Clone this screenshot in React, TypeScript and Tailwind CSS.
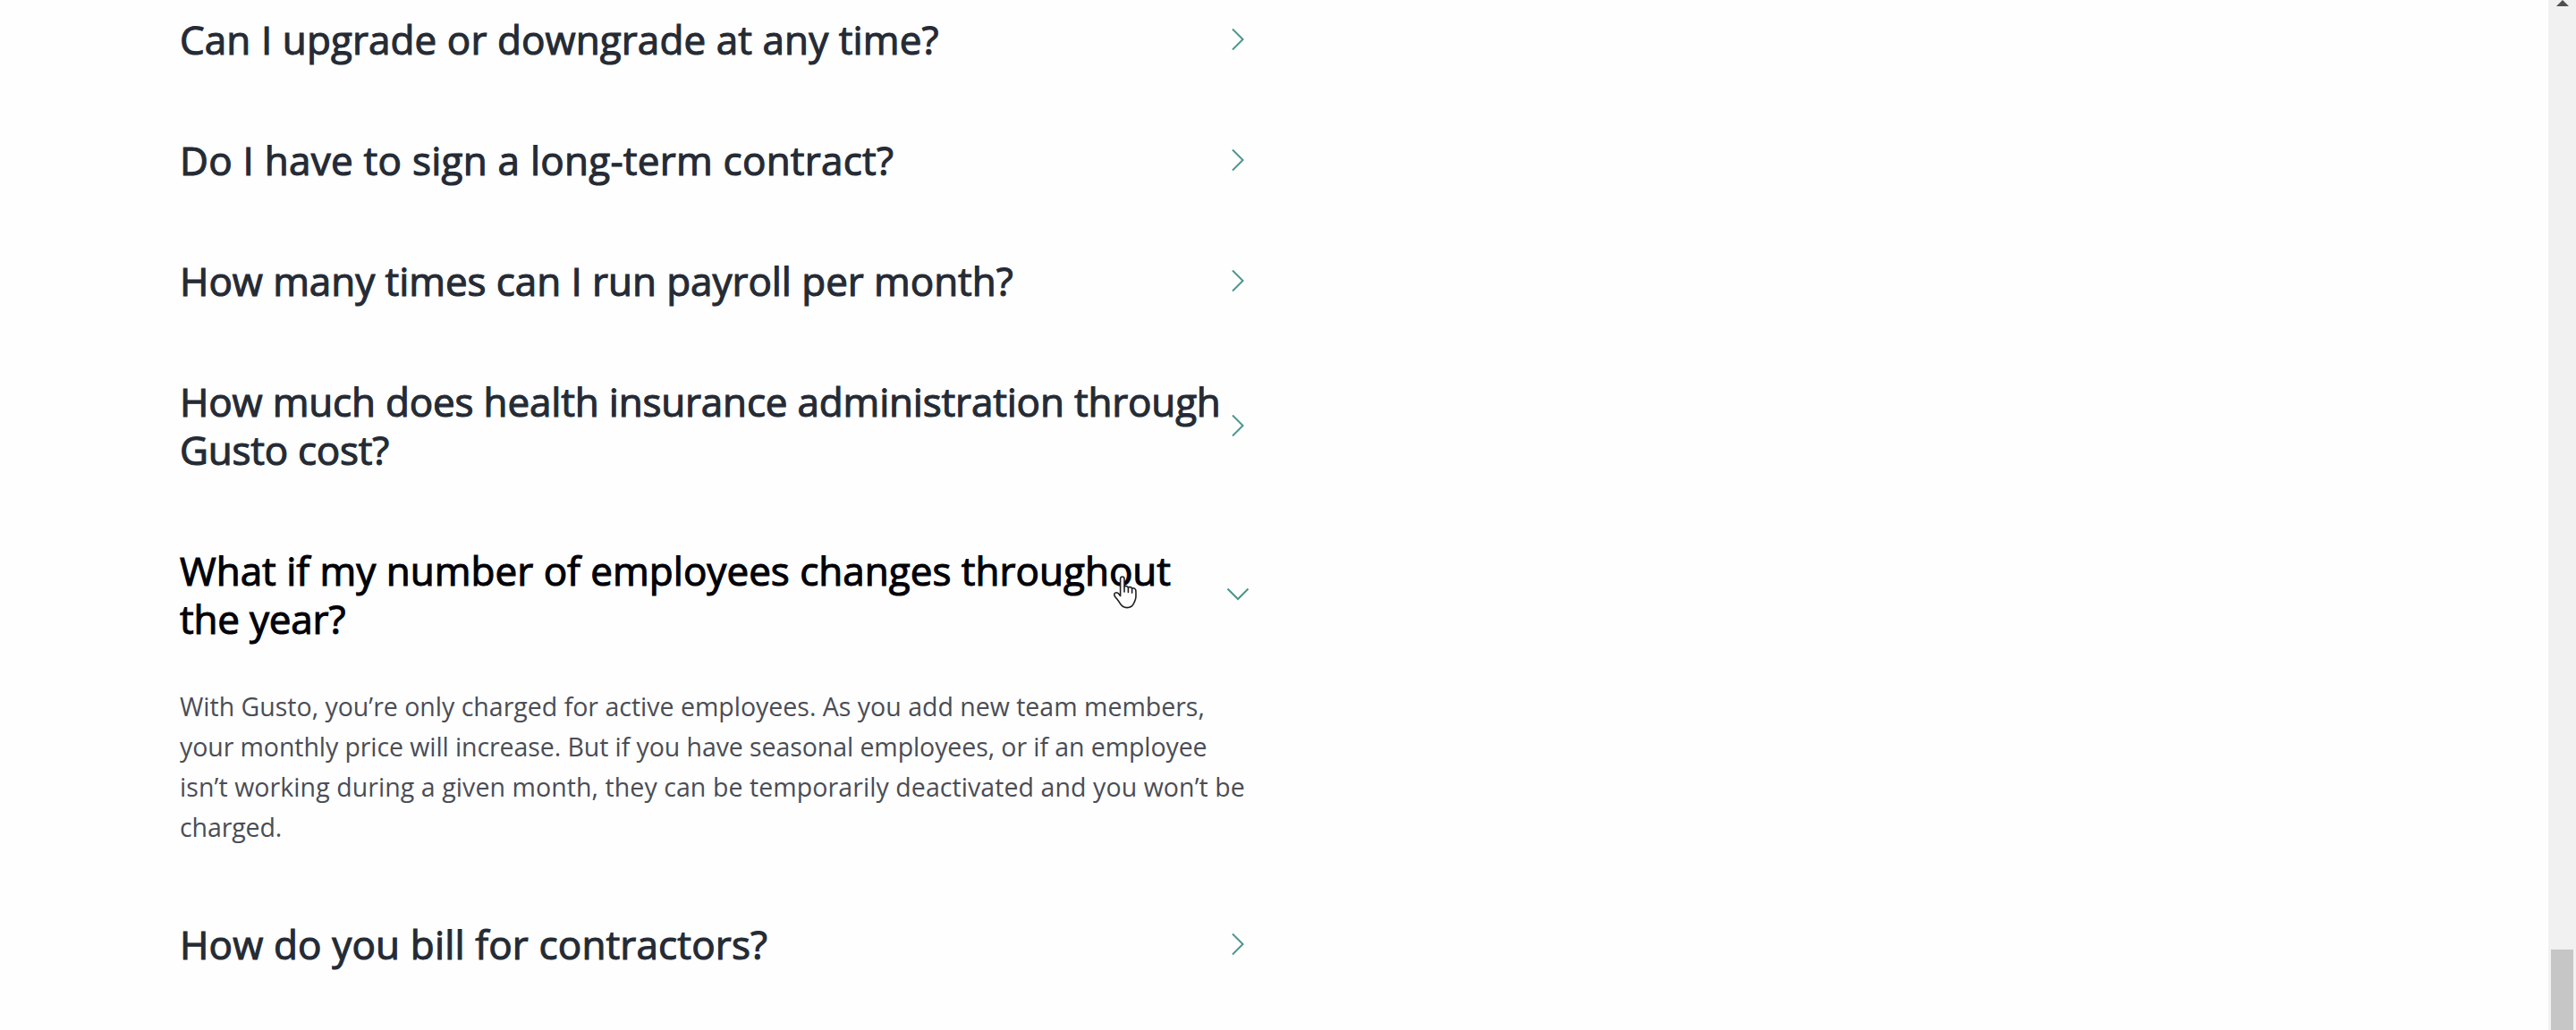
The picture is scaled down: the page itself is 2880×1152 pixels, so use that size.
type Line = { text: string; tracking: string };

type Faq = { lines: Line[]; open?: boolean };

const faqs: Faq[] = [
  { lines: [{ text: "Can I upgrade or downgrade at any time?", tracking: "tracking-[0.09px]" }] },
  { lines: [{ text: "Do I have to sign a long-term contract?", tracking: "tracking-[0.25px]" }] },
  { lines: [{ text: "How many times can I run payroll per month?", tracking: "tracking-[-0.06px]" }] },
  {
    lines: [
      { text: "How much does health insurance administration through", tracking: "tracking-[-0.18px]" },
      { text: "Gusto cost?", tracking: "tracking-[-0.25px]" },
    ],
  },
  {
    open: true,
    lines: [
      { text: "What if my number of employees changes throughout", tracking: "tracking-[0.01px]" },
      { text: "the year?", tracking: "tracking-[-0.2px]" },
    ],
  },
  { lines: [{ text: "How do you bill for contractors?", tracking: "tracking-[0.15px]" }] },
];

const answer: Line[] = [
  { text: "With Gusto, you’re only charged for active employees. As you add new team members,", tracking: "tracking-normal" },
  { text: "your monthly price will increase. But if you have seasonal employees, or if an employee", tracking: "tracking-[-0.08px]" },
  { text: "isn’t working during a given month, they can be temporarily deactivated and you won’t be", tracking: "tracking-[0.08px]" },
  { text: "charged.", tracking: "tracking-[-0.1px]" },
];

function Chevron({ open }: { open?: boolean }) {
  return (
    <svg className="h-6 w-6 shrink-0" viewBox="0 0 24 24" fill="none" stroke="#4b968b" strokeWidth="2">
      {open ? <path d="M0.5 5.500 12 17 23.500 5.500" /> : <path d="M6 0.5 17.500 12 6 23.500" />}
    </svg>
  );
}

function HandCursor() {
  return (
    <svg className="absolute left-[1244px] top-[644px] h-[37px] w-[29px]" viewBox="0 0 29 37" fill="#ffffff" stroke="#1f1f1f" strokeWidth="1.6" strokeLinejoin="round" strokeLinecap="round">
      <path d="M8.6 22.5V3.6C8.6 1.9 9.5 1 10.8 1s2.2.9 2.2 2.6v8.6c.6-1 3.8-.9 4.4.9 1-1 3.7-.6 4.2 1.1 1.2-.9 3.6-.4 4.1 1.5.4 2 .3 5.7.2 8.3-.1 2.9-1.500 4.6-2.2 6.600-1.2 3.300-3.700 5-7.700 5-4.2 0-6.300-1.900-8.100-5.200-1.300-2.400-3-4.100-5.300-7.200-1.100-1.500-1.200-3.400.2-4.100 1.900-.9 4.100.8 5.800 3.400Z" />
      <path d="M13 12.5v5.5M17.4 13.3v5.2M21.6 14.5v4.6" fill="none" />
    </svg>
  );
}

function FaqItem({ lines, open }: Faq) {
  return (
    <section>
      <button className="flex w-full items-center justify-between text-left">
        <h3
          className={
            open
              ? "pl-px text-[44px] leading-[54px] text-[#020208] [-webkit-text-stroke:1.1px_#020208]"
              : "pl-px text-[44px] leading-[54px] text-[#252b35] [-webkit-text-stroke:1.1px_#252b35]"
          }
        >
          {lines.map((line) => (
            <span key={line.text} className={"block whitespace-nowrap " + line.tracking}>
              {line.text}
            </span>
          ))}
        </h3>
        <Chevron open={open} />
      </button>
      {open && (
        <p className="mt-[49px] pl-px text-[28.5px] leading-[45px] text-[#4a4d56]">
          {answer.map((line) => (
            <span key={line.text} className={"block whitespace-nowrap " + line.tracking}>
              {line.text}
            </span>
          ))}
        </p>
      )}
    </section>
  );
}

export default function App() {
  return (
    <div className="relative flex h-[1152px] w-[2880px] justify-between overflow-hidden bg-[#fefefe] font-['Open_Sans',sans-serif]">
      <main className="ml-[200px] mt-[17px] flex w-[1196px] flex-col gap-[81px]">
        {faqs.map((faq) => (
          <FaqItem key={faq.lines[0].text} {...faq} />
        ))}
      </main>
      <aside className="flex w-[31px] flex-col items-center justify-between bg-[#f1f1f1]">
        <svg className="h-[7px] w-[14px]" viewBox="0 0 14 7" fill="#505050">
          <path d="M7 0 14 7H0Z" />
        </svg>
        <div className="h-[90px] w-[25px] bg-[#c6c6c6]" />
      </aside>
      <HandCursor />
    </div>
  );
}
